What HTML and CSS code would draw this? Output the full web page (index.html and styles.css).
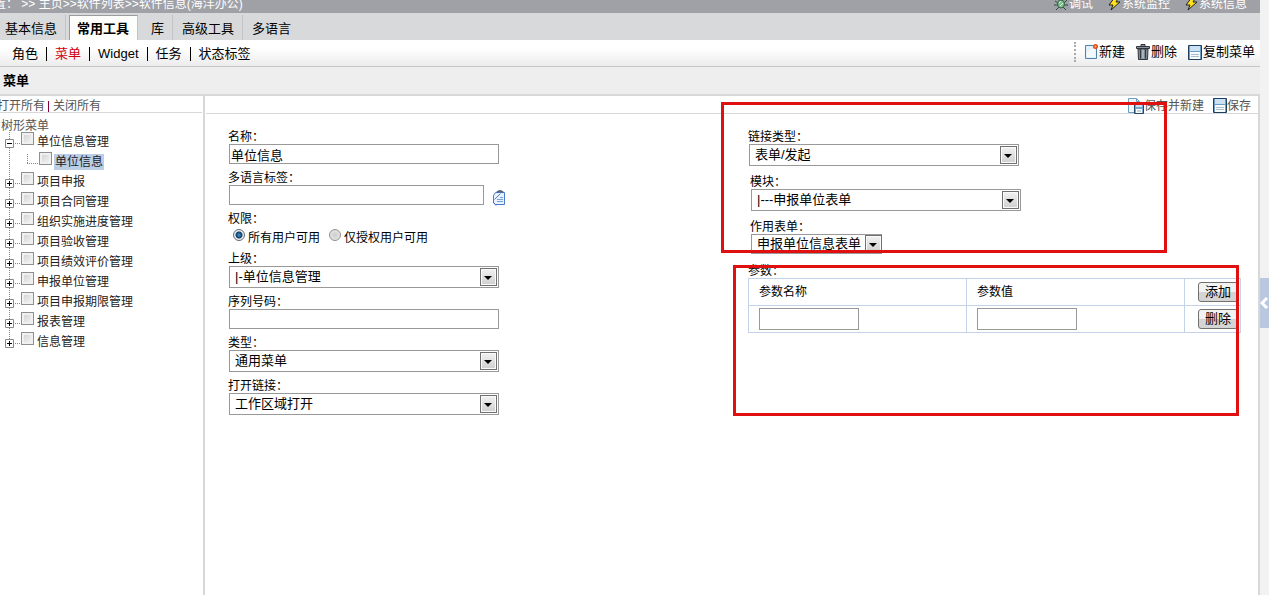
FILE: index.html
```html
<!DOCTYPE html>
<html lang="zh-CN">

<head>
	<meta charset="utf-8">
	<title>菜单</title>
	<link rel="stylesheet" href="styles.css">
</head>

<body>
	<svg class="sprite" width="0" height="0">
		<symbol id="bug" viewBox="0 0 14 14">
			<path d="M1 4l3 2M0 8h4M2 13l3-3M13 3l-3 3M14 8h-4M12 13l-3-3M5 1l1 3M9 1L8 4" stroke="#2e4a3c" fill="none" />
			<ellipse cx="7" cy="7" rx="3.5" ry="4" fill="#7dc08a" stroke="#35634a" />
			<path d="M5 6l2-2M6 9l3-3" stroke="#d9f5dc" />
		</symbol>
		<symbol id="bolt" viewBox="0 0 13 14">
			<path d="M7 0h4L8 5h4L3 13l2-5H1z" fill="#ffe21a" stroke="#222" stroke-width="1" />
		</symbol>
		<symbol id="page" viewBox="0 0 14 16">
			<path d="M1.5 1.5h11v13h-11z" fill="#e2f1fc" stroke="#4d82ac" />
			<path d="M3 8l8-5v10H3z" fill="#fff" opacity=".6" />
			<circle cx="11.5" cy="2.5" r="2.5" fill="#e8491d" />
			<circle cx="11.5" cy="2.5" r="1" fill="#ffc04d" />
		</symbol>
		<symbol id="trash" viewBox="0 0 14 16">
			<path d="M5 2V.5h4V2M.5 2.5h13v2H.5z" fill="#8b949c" stroke="#30363c" />
			<path d="M2 5h10l-.5 10.5h-9z" fill="#7e8991" stroke="#30363c" />
			<path d="M4.5 5.5v9M9.5 5.5v9" stroke="#30363c" />
			<path d="M7 5.5v9" stroke="#d5dce1" />
		</symbol>
		<symbol id="disk" viewBox="0 0 14 15">
			<path d="M.5.5h13v14H.5z" fill="#6d9cc4" stroke="#1f3f5f" />
			<path d="M2 1h10v5H2z" fill="#cbe2f4" />
			<path d="M2 7h10v7H2z" fill="#f6fafd" />
			<path d="M3 9.5h8M3 11.5h8" stroke="#a8bccb" />
		</symbol>
		<symbol id="pagedisk" viewBox="0 0 16 16">
			<path d="M.5.5h8l3 3v11H.5z" fill="#edf6fc" stroke="#6a9dc0" />
			<path d="M8.5.5v3h3" fill="none" stroke="#6a9dc0" />
			<path d="M6.500 6.500h9v9h-9z" fill="#79a7cc" stroke="#24486b" />
			<path d="M8 11h6v4H8z" fill="#fff" />
			<path d="M8 7h6v2H8z" fill="#cbe2f4" />
			<path d="M9 13h4" stroke="#8ea9bd" />
		</symbol>
		<symbol id="clip" viewBox="0 0 14 16">
			<path d="M3.500 2.500h9v12h-9l-2-2v-7z" fill="#e8f1fd" stroke="#4a7acb" />
			<path d="M5 2.500q3-3 6 0" fill="none" stroke="#56657c" stroke-width="2" />
			<path d="M2.500 9.500l6-6" fill="none" stroke="#5b7fb8" />
			<path d="M8 7.500h3M5 9.500h6M5 11.500h6" stroke="#7ba0d8" />
			<path d="M1 12l3 3.500" stroke="#3a68b4" />
		</symbol>
		<symbol id="plus" viewBox="0 0 21 20">
			<path d="M9.500 0v20" stroke="#888" stroke-dasharray="1 1" />
			<path d="M15 11.500h6" stroke="#888" stroke-dasharray="1 1" />
			<path d="M5.500 7.500h8v8h-8z" fill="#fff" stroke="#888" />
			<path d="M7 11.500h5M9.500 9v5" stroke="#000" />
		</symbol>
		<symbol id="plusend" viewBox="0 0 21 20">
			<path d="M9.500 0v8" stroke="#888" stroke-dasharray="1 1" />
			<path d="M15 11.500h6" stroke="#888" stroke-dasharray="1 1" />
			<path d="M5.500 7.500h8v8h-8z" fill="#fff" stroke="#888" />
			<path d="M7 11.500h5M9.500 9v5" stroke="#000" />
		</symbol>
		<symbol id="minus" viewBox="0 0 21 20">
			<path d="M9.500 0v20" stroke="#888" stroke-dasharray="1 1" />
			<path d="M15 11.500h6" stroke="#888" stroke-dasharray="1 1" />
			<path d="M5.500 7.500h8v8h-8z" fill="#fff" stroke="#888" />
			<path d="M7 11.500h5" stroke="#000" />
		</symbol>
		<symbol id="leaf" viewBox="0 0 39 20">
			<path d="M9.500 0v20M27.500 2v9M27 11.500h11" fill="none" stroke="#888" stroke-dasharray="1 1" />
		</symbol>
	</svg>

	<main class="main">
		<header class="topbar">
			<span class="crumbs">置： &gt;&gt; 主页&gt;&gt;软件列表&gt;&gt;软件信息(海洋办公)</span>
			<a href="#"><svg width="14" height="14"><use href="#bug" /></svg>调试</a>
			<a href="#"><svg width="13" height="14"><use href="#bolt" /></svg>系统监控</a>
			<a href="#"><svg width="13" height="14"><use href="#bolt" /></svg>系统信息</a>
		</header>
		<nav class="tabs">
			<a href="#">基本信息</a>
			<a href="#" class="active">常用工具</a>
			<a href="#">库</a>
			<a href="#">高级工具</a>
			<a href="#">多语言</a>
		</nav>
		<div class="subnav">
			<nav class="links">
				<a href="#">角色</a>
				<a href="#" class="current">菜单</a>
				<a href="#">Widget</a>
				<a href="#">任务</a>
				<a href="#">状态标签</a>
			</nav>
			<div class="tools">
				<button type="button"><svg width="14" height="16"><use href="#page" /></svg>新建</button>
				<button type="button"><svg width="14" height="16"><use href="#trash" /></svg>删除</button>
				<button type="button"><svg width="14" height="15"><use href="#disk" /></svg>复制菜单</button>
			</div>
		</div>
		<h1 class="title">菜单</h1>

		<div class="content">
			<aside class="side">
				<div class="sidebar-head"><a href="#">打开所有</a><i></i><a href="#">关闭所有</a></div>
				<div class="root">树形菜单</div>
				<ul class="tree">
					<li><svg width="21" height="20"><use href="#minus" /></svg><input type="checkbox" id="n1"><label for="n1">单位信息管理</label></li>
					<li><svg width="39" height="20"><use href="#leaf" /></svg><input type="checkbox" id="n2"><label for="n2" class="selected">单位信息</label></li>
					<li><svg width="21" height="20"><use href="#plus" /></svg><input type="checkbox" id="n3"><label for="n3">项目申报</label></li>
					<li><svg width="21" height="20"><use href="#plus" /></svg><input type="checkbox" id="n4"><label for="n4">项目合同管理</label></li>
					<li><svg width="21" height="20"><use href="#plus" /></svg><input type="checkbox" id="n5"><label for="n5">组织实施进度管理</label></li>
					<li><svg width="21" height="20"><use href="#plus" /></svg><input type="checkbox" id="n6"><label for="n6">项目验收管理</label></li>
					<li><svg width="21" height="20"><use href="#plus" /></svg><input type="checkbox" id="n7"><label for="n7">项目绩效评价管理</label></li>
					<li><svg width="21" height="20"><use href="#plus" /></svg><input type="checkbox" id="n8"><label for="n8">申报单位管理</label></li>
					<li><svg width="21" height="20"><use href="#plus" /></svg><input type="checkbox" id="n9"><label for="n9">项目申报期限管理</label></li>
					<li><svg width="21" height="20"><use href="#plus" /></svg><input type="checkbox" id="n10"><label for="n10">报表管理</label></li>
					<li><svg width="21" height="20"><use href="#plusend" /></svg><input type="checkbox" id="n11"><label for="n11">信息管理</label></li>
				</ul>
			</aside>

			<section class="panel">
				<div class="actions">
					<button type="button"><svg width="16" height="16"><use href="#pagedisk" /></svg>保存并新建</button>
					<button type="button"><svg width="14" height="15"><use href="#disk" /></svg>保存</button>
				</div>
				<form class="form">
					<div class="col">
						<div class="field">
							<label for="name">名称：</label>
							<input type="text" id="name" value="单位信息">
						</div>
						<div class="field">
							<label for="lang">多语言标签：</label>
							<div class="with-icon">
								<input type="text" id="lang">
								<svg width="14" height="16"><use href="#clip" /></svg>
							</div>
						</div>
						<div class="field">
							<span class="caption">权限：</span>
							<div class="radios">
								<input type="radio" name="auth" id="all" checked><label for="all">所有用户可用</label>
								<input type="radio" name="auth" id="some"><label for="some">仅授权用户可用</label>
							</div>
						</div>
						<div class="field">
							<label for="parent">上级：</label>
							<div class="select"><select id="parent"><option>|-单位信息管理</option></select></div>
						</div>
						<div class="field">
							<label for="order">序列号码：</label>
							<input type="text" id="order">
						</div>
						<div class="field">
							<label for="type">类型：</label>
							<div class="select"><select id="type"><option>通用菜单</option></select></div>
						</div>
						<div class="field">
							<label for="open">打开链接：</label>
							<div class="select"><select id="open"><option>工作区域打开</option></select></div>
						</div>
					</div>

					<div class="col wide">
						<div class="field">
							<label for="link">链接类型：</label>
							<div class="select"><select id="link"><option>表单/发起</option></select></div>
						</div>
						<div class="field nested">
							<label for="module">模块：</label>
							<div class="select"><select id="module"><option>|---申报单位表单</option></select></div>
						</div>
						<div class="field nested">
							<label for="target">作用表单：</label>
							<div class="select small"><select id="target"><option>申报单位信息表单</option></select></div>
						</div>
						<div class="field params">
							<span class="caption">参数：</span>
							<table>
								<tr>
									<th>参数名称</th>
									<th>参数值</th>
									<td class="op"><button type="button">添加</button></td>
								</tr>
								<tr>
									<td><input type="text" aria-label="参数名称"></td>
									<td><input type="text" aria-label="参数值"></td>
									<td class="op"><button type="button">删除</button></td>
								</tr>
							</table>
						</div>
					</div>
				</form>
				<div class="mark mark-link"></div>
				<div class="mark mark-params"></div>
			</section>
		</div>
	</main>

	<div class="rail">
		<button type="button" class="handle" aria-label="展开"><svg width="9" height="12" viewBox="0 0 9 12"><path d="M7 1L2 6l5 5" fill="none" stroke="#fff" stroke-width="3" /></svg></button>
	</div>
</body>

</html>
```
FILE: styles.css
```css
*, *::before, *::after {
	box-sizing: border-box;
}

body {
	margin: 0;
	display: flex;
	min-height: 100vh;
	background: #f2f2f2;
	color: #000;
	font: 12px/16px "Liberation Sans", "Noto Sans CJK SC", sans-serif;
	overflow: hidden;
}

a {
	color: inherit;
	text-decoration: none;
}

button, input, select {
	font: inherit;
	color: inherit;
	margin: 0;
}

svg {
	flex: none;
}

.sprite {
	position: absolute;
}

.main {
	flex: 1;
	min-width: 0;
	display: flex;
	flex-direction: column;
	background: #fff;
}

/* Top bar, its first line is cut by the window edge */

.topbar {
	display: flex;
	align-items: flex-end;
	height: 13px;
	padding: 0 13px 1px 0;
	background: #9fa1a7;
	color: #fff;
	white-space: nowrap;
}

.topbar a {
	display: flex;
	align-items: center;
	gap: 1px;
	margin-left: 15px;
}

.crumbs {
	flex: 1;
	margin-left: -6px;
}

.tabs {
	display: flex;
	height: 27px;
	padding-top: 2px;
	background: #d8d9db;
	font-size: 13px;
	line-height: 28px;
}

.tabs a {
	padding: 0 8px 0 9px;
	border-right: 1px solid #c2c3c5;
}

.tabs a:first-child {
	padding-left: 5px;
	margin-right: 3px;
}

.tabs a:last-child {
	border-right: 0;
}

.tabs .active {
	padding: 0 8px 0 7px;
	margin-right: 4px;
	border-top: 1px solid #9a9b9d;
	border-left: 1px solid #9a9b9d;
	background: #fdfdfb;
	font-weight: bold;
	line-height: 26px;
}

/* Second level menu */

.subnav {
	display: flex;
	justify-content: space-between;
	height: 27px;
	border-bottom: 1px solid #c6c6c6;
	background: linear-gradient(#fff 30%, #ececec);
	font-size: 13px;
}

.links {
	display: flex;
	align-items: center;
	padding: 2px 0 0 4px;
}

.links a {
	padding: 0 8px;
	line-height: 14px;
	border-right: 1px solid #000;
}

.links a:last-child {
	border-right: 0;
}

.links .current {
	color: #d0000c;
}

.tools {
	display: flex;
	align-items: center;
	gap: 11px;
	height: 20px;
	margin-top: 2px;
	padding: 0 5px 0 8px;
	border-left: 2px dotted #aaa;
}

.tools button, .actions button {
	display: flex;
	align-items: center;
	padding: 0;
	border: 0;
	background: none;
	cursor: pointer;
}

.tools button {
	gap: 1px;
}

.title {
	margin: 0;
	height: 29px;
	padding-left: 3px;
	border-bottom: 2px solid #d8d8da;
	background: #eee;
	font-size: 13px;
	line-height: 28px;
}

.content {
	flex: 1;
	display: flex;
	border-right: 2px solid #d8d8da;
}

/* Tree */

.side {
	width: 205px;
	flex: none;
	border-right: 2px solid #d8d8da;
	color: #222;
}

.sidebar-head {
	display: flex;
	align-items: center;
	height: 17px;
	padding-top: 4px;
	margin: 0 1px 8px 0;
	border-bottom: 1px solid #d8d8da;
	color: #555;
}

.sidebar-head a:first-child {
	margin-left: -3px;
}

.sidebar-head i {
	width: 1px;
	height: 11px;
	margin: 0 4px 0 3px;
	background: #804;
}

.root {
	padding-left: 1px;
	color: #555;
	line-height: 11px;
}

.tree {
	margin: 0;
	padding: 0;
	list-style: none;
}

.tree li {
	display: flex;
	align-items: flex-start;
	height: 20px;
}

.tree input {
	appearance: none;
	width: 13px;
	height: 13px;
	margin-right: 2px;
	border: 1px solid #8e8f8f;
	background: linear-gradient(135deg, #cfcfcf, #f7f7f7);
	box-shadow: inset 0 0 0 2px #f0f0f0;
}

.tree label {
	margin-top: 2px;
	padding: 0 1px;
}

.tree .selected {
	background: #bccde6;
}

/* Form */

.panel {
	position: relative;
	flex: 1;
	min-width: 0;
}

.actions {
	display: flex;
	justify-content: flex-end;
	gap: 9px;
	height: 18px;
	padding: 2px 7px 0 0;
	margin-left: 1px;
	border-bottom: 1px solid #d8d8da;
	color: #555;
}

.form {
	display: grid;
	grid-template-columns: 520px 1fr;
	padding: 14px 17px 0 23px;
}

.col {
	display: flex;
	flex-direction: column;
	gap: 5px;
}

.wide {
	gap: 7px;
}

.field > label, .caption {
	display: block;
	padding-top: 2px;
	line-height: 14px;
}

.field > input, .with-icon, .select {
	margin-left: 1px;
}

.nested {
	padding-left: 2px;
}

input[type="text"] {
	display: block;
	width: 270px;
	height: 20px;
	padding: 0 1px;
	border: 1px solid #999;
	background: #fff;
	font-size: 13px;
}

.with-icon {
	display: flex;
	align-items: flex-start;
	gap: 8px;
	height: 20px;
}

.with-icon input[type="text"] {
	width: 255px;
}

.with-icon svg {
	margin-top: 5px;
}

.radios {
	display: flex;
	align-items: center;
	height: 19px;
}

.radios input {
	appearance: none;
	width: 12px;
	height: 12px;
	margin: 0 3px 2px 5px;
	border: 1px solid #8e8f8f;
	border-radius: 50%;
	background: radial-gradient(#ccc, #eee);
}

.radios input:checked {
	border-color: #5c6c7c;
	background: radial-gradient(circle at 50% 50%, #3d9bd0 0, #123d63 3px, #eee 4px);
}

.radios label {
	margin: 5px 4px 0 0;
}

.select {
	position: relative;
	width: 270px;
	height: 22px;
}

.select select {
	appearance: none;
	width: 100%;
	height: 100%;
	padding: 0 20px 0 5px;
	border: 1px solid #999;
	border-radius: 0;
	background: #fff;
	font-size: 13px;
}

/* Drop-down button and its arrow */

.select::before {
	content: "";
	position: absolute;
	top: 2px;
	right: 2px;
	bottom: 2px;
	width: 17px;
	border: 1px solid #707070;
	background: linear-gradient(#f2f2f2, #cfcfcf);
	box-shadow: inset 0 0 0 1px #fafafa;
	pointer-events: none;
}

.select::after {
	content: "";
	position: absolute;
	top: 10px;
	right: 7px;
	border: solid transparent;
	border-width: 4px 4px 0;
	border-top-color: #000;
	pointer-events: none;
}

.small {
	width: 131px;
	height: 20px;
}

.small::before {
	top: 1px;
	right: 0;
	bottom: 1px;
}

.small::after {
	top: 9px;
	right: 5px;
}

.params {
	margin-top: 1px;
}

.params table {
	width: 100%;
	table-layout: fixed;
	border-collapse: collapse;
}

.params th, .params td {
	height: 27px;
	padding: 0 10px;
	border: 1px solid #c3d2e8;
	font-weight: normal;
	text-align: left;
}

.params .op {
	width: 56px;
	padding: 0 0 0 13px;
}

.params input[type="text"] {
	width: 100px;
	height: 22px;
}

.params button {
	display: block;
	width: 40px;
	height: 20px;
	padding: 0;
	border: 1px solid #707070;
	border-radius: 3px;
	background: linear-gradient(#f2f2f2 50%, #d4d4d4 50%);
	font-size: 13px;
	line-height: 18px;
}

/* Red marks over the form */

.mark {
	position: absolute;
	border: 3px solid #e01010;
	pointer-events: none;
}

.mark-link {
	top: 6px;
	left: 516px;
	right: 91px;
	height: 151px;
}

.mark-params {
	top: 169px;
	left: 528px;
	right: 19px;
	height: 151px;
}

/* Right rail */

.rail {
	width: 9px;
	padding-top: 278px;
}

.handle {
	display: flex;
	align-items: center;
	width: 100%;
	height: 50px;
	padding: 0;
	border: 0;
	background: #b9c8de;
}
```
